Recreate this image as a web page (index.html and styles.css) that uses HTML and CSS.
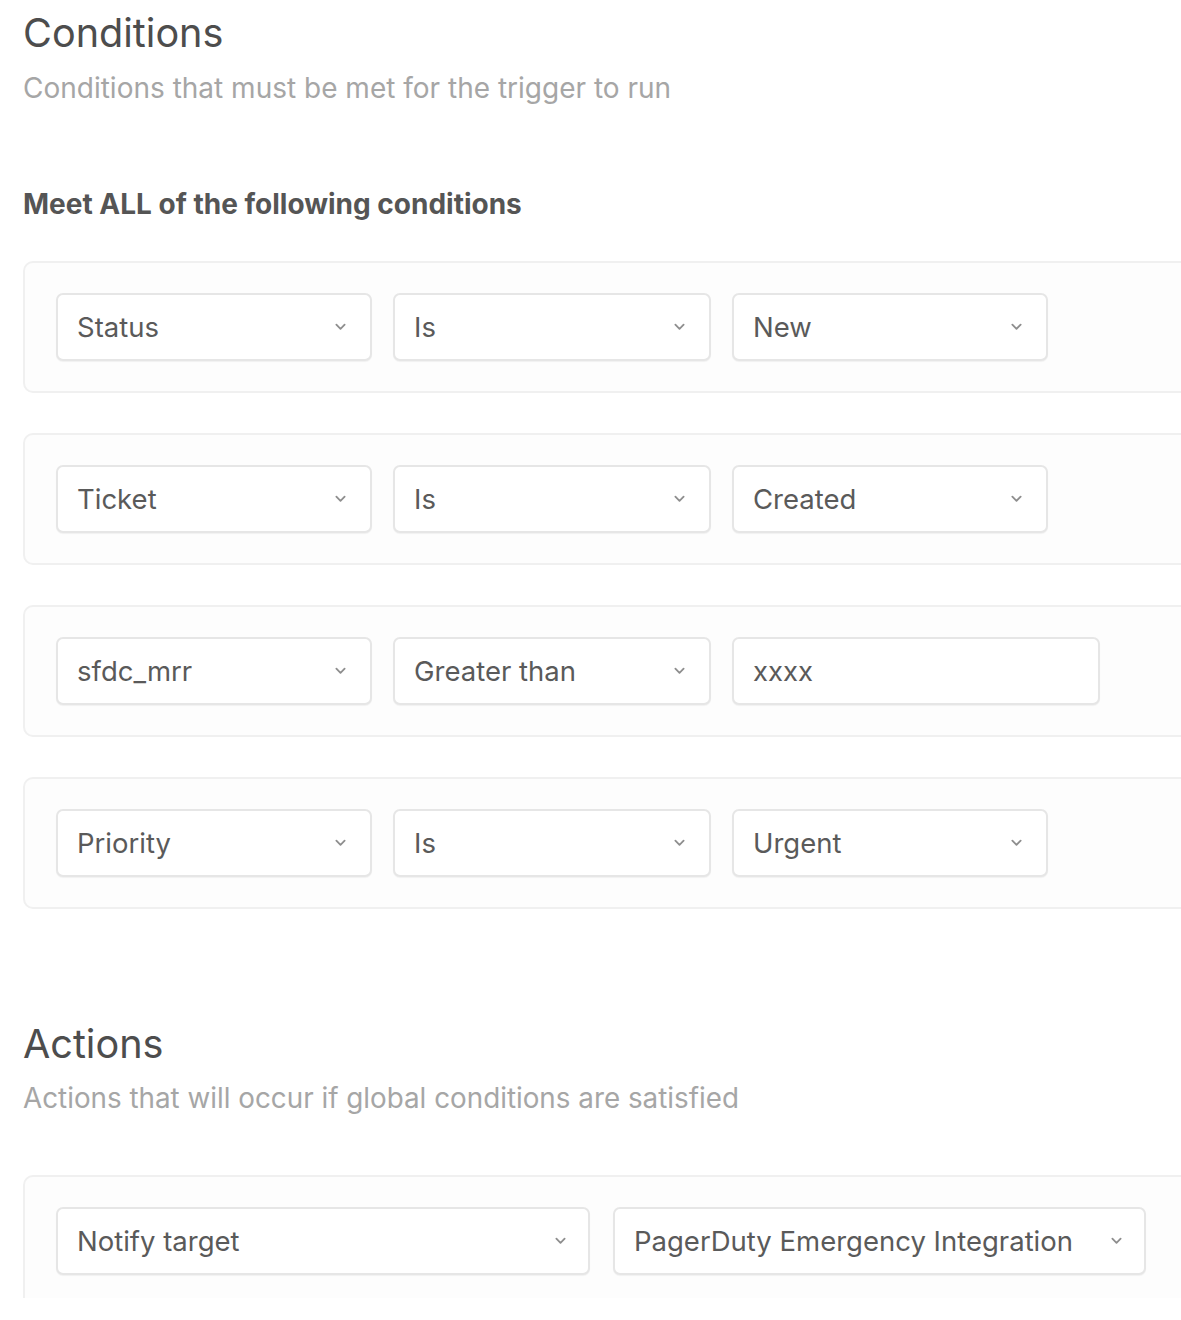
FILE: index.html
```html
<!DOCTYPE html>
<html lang="en">
<head>
<meta charset="utf-8">
<title>Trigger conditions</title>
<link rel="stylesheet" href="styles.css">
</head>
<body>
<div class="viewport">
  <div class="page">
    <section class="section section-conditions">
      <h1 class="section-title">Conditions</h1>
      <p class="section-sub">Conditions that must be met for the trigger to run</p>
      <h2 class="match-label">Meet ALL of the following conditions</h2>
      <div class="card-list">
        <div class="card">
          <div class="field select w-a"><span class="field-text">Status</span><svg class="chev" viewBox="0 0 12 8"><path d="M1.5 1.5 L6 6 L10.5 1.5"/></svg></div>
          <div class="field select w-b"><span class="field-text">Is</span><svg class="chev" viewBox="0 0 12 8"><path d="M1.5 1.5 L6 6 L10.5 1.5"/></svg></div>
          <div class="field select w-c"><span class="field-text">New</span><svg class="chev" viewBox="0 0 12 8"><path d="M1.5 1.5 L6 6 L10.5 1.5"/></svg></div>
        </div>
        <div class="card">
          <div class="field select w-a"><span class="field-text">Ticket</span><svg class="chev" viewBox="0 0 12 8"><path d="M1.5 1.5 L6 6 L10.5 1.5"/></svg></div>
          <div class="field select w-b"><span class="field-text">Is</span><svg class="chev" viewBox="0 0 12 8"><path d="M1.5 1.5 L6 6 L10.5 1.5"/></svg></div>
          <div class="field select w-c"><span class="field-text">Created</span><svg class="chev" viewBox="0 0 12 8"><path d="M1.5 1.5 L6 6 L10.5 1.5"/></svg></div>
        </div>
        <div class="card">
          <div class="field select w-a"><span class="field-text">sfdc_mrr</span><svg class="chev" viewBox="0 0 12 8"><path d="M1.5 1.5 L6 6 L10.5 1.5"/></svg></div>
          <div class="field select w-b"><span class="field-text">Greater than</span><svg class="chev" viewBox="0 0 12 8"><path d="M1.5 1.5 L6 6 L10.5 1.5"/></svg></div>
          <div class="field input w-input"><span class="field-text">xxxx</span></div>
        </div>
        <div class="card">
          <div class="field select w-a"><span class="field-text">Priority</span><svg class="chev" viewBox="0 0 12 8"><path d="M1.5 1.5 L6 6 L10.5 1.5"/></svg></div>
          <div class="field select w-b"><span class="field-text">Is</span><svg class="chev" viewBox="0 0 12 8"><path d="M1.5 1.5 L6 6 L10.5 1.5"/></svg></div>
          <div class="field select w-c"><span class="field-text">Urgent</span><svg class="chev" viewBox="0 0 12 8"><path d="M1.5 1.5 L6 6 L10.5 1.5"/></svg></div>
        </div>
      </div>
    </section>

    <section class="section section-actions">
      <h1 class="section-title">Actions</h1>
      <p class="section-sub">Actions that will occur if global conditions are satisfied</p>
      <div class="card card-action">
        <div class="field select w-wide"><span class="field-text">Notify target</span><svg class="chev" viewBox="0 0 12 8"><path d="M1.5 1.5 L6 6 L10.5 1.5"/></svg></div>
        <div class="field select w-wide2"><span class="field-text">PagerDuty Emergency Integration</span><svg class="chev" viewBox="0 0 12 8"><path d="M1.5 1.5 L6 6 L10.5 1.5"/></svg></div>
      </div>
    </section>
  </div>
</div>
</body>
</html>
```

FILE: styles.css
```css
html, body {
  margin: 0;
  padding: 0;
  background: #ffffff;
}

body {
  font-family: Inter, "Liberation Sans", Arial, sans-serif;
  color: #555555;
}

.viewport {
  width: 100%;
  height: 1298px;
  overflow: hidden;
}

.page {
  width: 1240px;
  padding: 9px 0 0 23px;
  box-sizing: border-box;
}

.section-title {
  margin: 0;
  font-size: 39.6px;
  line-height: 48px;
  font-weight: 400;
  color: #4d4d4d;
}

.section-sub {
  margin: 15px 0 0;
  font-size: 28px;
  line-height: 32px;
  color: #a6a6a6;
}

.section-actions .section-sub {
  margin-top: 14px;
  font-size: 27.8px;
}

.match-label {
  margin: 84px 0 0;
  font-size: 28px;
  line-height: 32px;
  font-weight: 700;
  color: #555555;
}

.card-list {
  margin-top: 41px;
  display: flex;
  flex-direction: column;
  gap: 40px;
}

.card {
  display: flex;
  align-items: center;
  gap: 21px;
  padding: 30px 31px;
  border: 2px solid #f0f0f0;
  border-radius: 10px;
  background: #fdfdfd;
}

.field {
  box-sizing: border-box;
  height: 68px;
  display: flex;
  align-items: center;
  justify-content: space-between;
  padding: 0 24px 0 19px;
  border: 2px solid #e6e6e6;
  border-radius: 7px;
  background: #ffffff;
  box-shadow: 0 1px 1px rgba(0, 0, 0, 0.05);
  font-size: 27.5px;
  color: #5a5a5a;
}

.field-text {
  white-space: nowrap;
}

.chev {
  width: 11px;
  height: 8px;
  flex: none;
}

.chev path {
  fill: none;
  stroke: #8e8e8e;
  stroke-width: 2;
  stroke-linecap: round;
  stroke-linejoin: round;
}

.w-a { width: 316px; }
.w-b { width: 318px; }
.w-c { width: 316px; }
.w-input { width: 368px; }

.section-actions {
  margin-top: 111px;
}

.card-action {
  margin-top: 61px;
  gap: 23px;
  padding-bottom: 60px;
}

.card-action .field {
  padding-right: 22px;
}

.w-wide { width: 534px; }
.w-wide2 { width: 533px; }
```
